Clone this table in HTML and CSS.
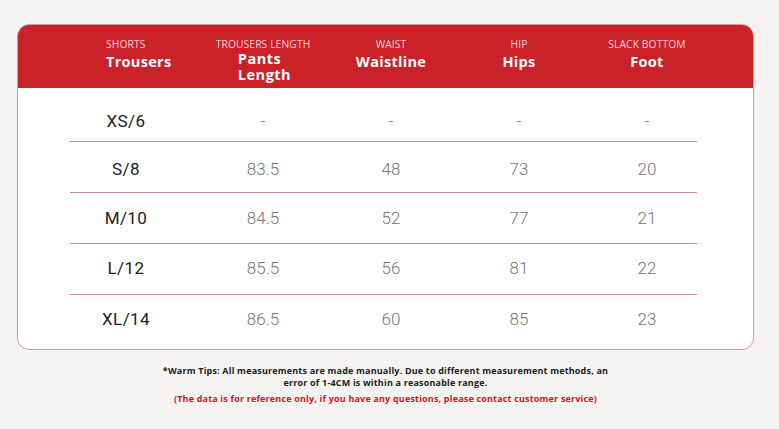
FILE: index.html
```html
<!DOCTYPE html>
<html lang="en">
<head>
<meta charset="utf-8">
<title>Size chart</title>
<link rel="stylesheet" href="styles.css">
</head>
<body>
<div class="page">
  <div class="card">
    <div class="head">
      <div class="grid">
        <div class="hcell first"><span class="sub">SHORTS</span><span class="main">Trousers</span></div>
        <div class="hcell"><span class="sub">TROUSERS LENGTH</span><span class="main two">Pants<br>Length</span></div>
        <div class="hcell"><span class="sub">WAIST</span><span class="main">Waistline</span></div>
        <div class="hcell"><span class="sub">HIP</span><span class="main">Hips</span></div>
        <div class="hcell"><span class="sub">SLACK BOTTOM</span><span class="main">Foot</span></div>
      </div>
    </div>
    <div class="body">
      <div class="row r1"><div class="grid"><span class="size">XS/6</span><span class="val">-</span><span class="val">-</span><span class="val">-</span><span class="val">-</span></div></div>
      <div class="row r2"><div class="grid"><span class="size">S/8</span><span class="val">83.5</span><span class="val">48</span><span class="val">73</span><span class="val">20</span></div></div>
      <div class="row r3"><div class="grid"><span class="size">M/10</span><span class="val">84.5</span><span class="val">52</span><span class="val">77</span><span class="val">21</span></div></div>
      <div class="row r4"><div class="grid"><span class="size">L/12</span><span class="val">85.5</span><span class="val">56</span><span class="val">81</span><span class="val">22</span></div></div>
      <div class="row last"><div class="grid"><span class="size">XL/14</span><span class="val">86.5</span><span class="val">60</span><span class="val">85</span><span class="val">23</span></div></div>
    </div>
  </div>
  <div class="notes">
    <p class="tip">*Warm Tips: All measurements are made manually. Due to different measurement methods, an<br>error of 1-4CM is within a reasonable range.</p>
    <p class="ref">(The data is for reference only, if you have any questions, please contact customer service)</p>
  </div>
</div>
</body>
</html>
```
FILE: styles.css
```css
* { box-sizing: border-box; }
html, body { margin: 0; padding: 0; }
body {
  background: #f4f3f1;
  font-family: "Open Sans", "Noto Sans", sans-serif;
  width: 779px;
  height: 429px;
  overflow: hidden;
}
.page {
  padding: 24px 0 0 17px;
}
.card {
  width: 737px;
  height: 326px;
  background: #ffffff;
  border: 1px solid #cf9ea3;
  border-radius: 12px;
  overflow: hidden;
}
.head {
  background: #cb2129;
  height: 64px;
  margin: -1px -1px 0;
  padding: 14px 0 0 53px;
}
.grid {
  display: grid;
  grid-template-columns: 129px repeat(4, 128px);
  width: 627px;
}
.hcell {
  display: flex;
  flex-direction: column;
  align-items: center;
  text-align: center;
}
.hcell.first {
  align-items: flex-start;
  padding-left: 36px;
}
.sub {
  font-size: 10.3px;
  line-height: 12px;
  color: #f6d2d4;
  white-space: nowrap;
  letter-spacing: 0.1px;
}
.main {
  margin-top: 4px;
  font-size: 14.5px;
  line-height: 16px;
  font-weight: 700;
  color: #ffffff;
  letter-spacing: 0.3px;
  white-space: nowrap;
}
.main.two {
  margin-top: 1px;
  line-height: 16px;
  text-align: left;
  padding-left: 3px;
  letter-spacing: 0.5px;
}
.body {
  padding: 0 0 0 52px;
}
.row {
  width: 627px;
  height: 51px;
  border-bottom: 1px solid #c98f96;
  display: flex;
  align-items: center;
}
.row.r1 {
  height: 54px;
  padding-top: 12px;
}
.row.r2 { padding-top: 4px; }
.row.r4 { padding-bottom: 2px; }
.row.last {
  border-bottom: none;
  height: 53px;
  padding-bottom: 6px;
}
.row .grid {
  align-items: center;
}
.size {
  font-family: Roboto, "Liberation Sans", sans-serif;
  font-size: 17px;
  line-height: 20px;
  color: #222222;
  letter-spacing: 0.4px;
  text-align: center;
  padding-right: 17px;
}
.val {
  font-family: Roboto, "Liberation Sans", sans-serif;
  font-weight: 300;
  font-size: 17px;
  line-height: 20px;
  color: #767676;
  text-align: center;
}
.notes {
  width: 737px;
  text-align: center;
  padding-top: 15px;
}
.notes p { margin: 0; }
.tip {
  font-size: 9px;
  line-height: 12px;
  font-weight: 700;
  color: #1c1c1c;
  letter-spacing: 0.18px;
}
.ref {
  margin-top: 4px !important;
  font-size: 9px;
  line-height: 12px;
  font-weight: 700;
  color: #d2141d;
  letter-spacing: 0.18px;
}
```
